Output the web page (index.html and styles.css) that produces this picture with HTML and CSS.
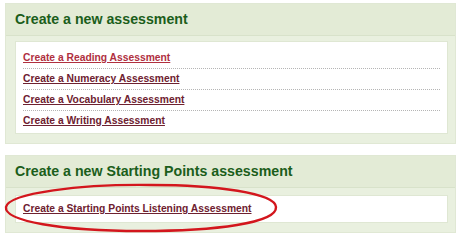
FILE: index.html
```html
<!DOCTYPE html>
<html lang="en">
<head>
    <meta charset="UTF-8">
    <title>Assessments</title>
    <link rel="stylesheet" href="styles.css">
</head>
<body>

    <div class="page">
        <!-- regular assessments -->
        <div class="panel">
            <div class="panel-head">Create a new assessment</div>
            <div class="panel-body">
                <ul class="link-list">
                    <li><a href="#" class="first">Create a Reading Assessment</a></li>
                    <li><a href="#">Create a Numeracy Assessment</a></li>
                    <li><a href="#">Create a Vocabulary Assessment</a></li>
                    <li><a href="#">Create a Writing Assessment</a></li>
                </ul>
            </div>
        </div>

        <!-- starting points -->
        <div class="panel">
            <div class="panel-head">Create a new Starting Points assessment</div>
            <div class="panel-body single">
                <ul class="link-list">
                    <li><a href="#">Create a Starting Points Listening Assessment</a></li>
                </ul>
            </div>
        </div>

        <!-- red marker circle -->
        <svg class="marker" width="290" height="56" viewBox="0 0 290 56">
            <path d="M150 4 C 80 3, 8 12, 5 26 C 3 40, 60 50, 140 50 C 215 50, 276 42, 275 26 C 274 12, 215 4, 150 4 Z"
                  fill="none" stroke="#d3161d" stroke-width="2.4"/>
        </svg>
    </div>

</body>
</html>
```

FILE: styles.css
```css
body {
    margin: 0;
    padding: 0;
    background-color: #fff;
    font-family: "Liberation Sans", Arial, sans-serif;
}
.page {
    position: relative;
    padding: 3px 6px 0 5px;
}
.panel {
    background-color: #e9f0df;
    border: 1px solid #e0e8d4;
    margin-bottom: 11px;
    padding-bottom: 9px;
}
.panel-head {
    height: 31px;
    line-height: 31px;
    padding-left: 9px;
    background-color: #e3ebd6;
    border-bottom: 1px solid #d8e2ca;
    color: #1b5e1b;
    font-size: 14.2px;
    font-weight: bold;
}
.panel-body {
    margin: 5px 7px 0 9px;
    background-color: #fff;
    border: 1px solid #dfe7d3;
    padding: 6px 7px 2px 7px;
}
.panel-body.single {
    margin-top: 7px;
    padding: 3px 7px 3px 7px;
}
.link-list {
    list-style: none;
    margin: 0;
    padding: 0;
}
.link-list li {
    font-size: 10.3px;
    line-height: 20px;
    border-bottom: 1px dotted #b5b5b5;
}
.link-list li:last-child {
    border-bottom: none;
}
.link-list a {
    color: #6e2130;
    font-weight: bold;
    text-decoration: underline;
}
.link-list a.first {
    color: #b0303f;
}
.marker {
    position: absolute;
    left: 1px;
    top: 181px;
}
```
